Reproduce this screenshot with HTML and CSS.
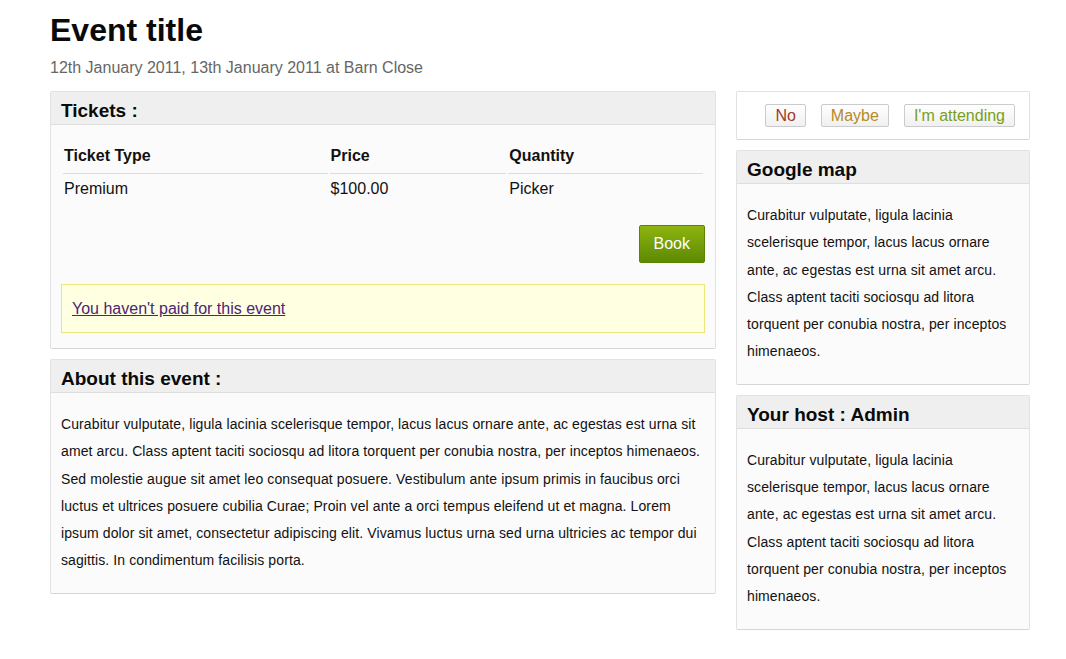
FILE: index.html
```html
<!DOCTYPE html>
<html lang="en">

<head>
    <meta charset="UTF-8">
    <meta name="viewport" content="width=device-width, initial-scale=1.0">
    <title>Event title</title>
    <link rel="stylesheet" href="styles.css">
</head>

<body>

    <div class="page">
        <h1 class="event__title">Event title</h1>
        <p class="event__meta">12th January 2011, 13th January 2011 at Barn Close</p>

        <div class="layout">
            <div class="layout__main">

                <div class="box">
                    <h2 class="box__title">Tickets :</h2>
                    <div class="box__body tickets">
                        <table class="tickets__table">
                            <thead>
                                <tr>
                                    <th class="col-type">Ticket Type</th>
                                    <th class="col-price">Price</th>
                                    <th>Quantity</th>
                                </tr>
                            </thead>
                            <tbody>
                                <tr>
                                    <td>Premium</td>
                                    <td>$100.00</td>
                                    <td>Picker</td>
                                </tr>
                            </tbody>
                        </table>
                        <div class="tickets__actions">
                            <button class="btn-book">Book</button>
                        </div>
                        <div class="notice">
                            <a href="#" class="notice__link">You haven't paid for this event</a>
                        </div>
                    </div>
                </div>

                <div class="box">
                    <h2 class="box__title">About this event :</h2>
                    <div class="box__body box__text">
                        <p>Curabitur vulputate, ligula lacinia scelerisque tempor, lacus lacus ornare ante, ac egestas est urna sit amet arcu. Class aptent taciti sociosqu ad litora torquent per conubia nostra, per inceptos himenaeos. Sed molestie augue sit amet leo consequat posuere. Vestibulum ante ipsum primis in faucibus orci luctus et ultrices posuere cubilia Curae; Proin vel ante a orci tempus eleifend ut et magna. Lorem ipsum dolor sit amet, consectetur adipiscing elit. Vivamus luctus urna sed urna ultricies ac tempor dui sagittis. In condimentum facilisis porta.</p>
                    </div>
                </div>

            </div>

            <div class="layout__side">

                <div class="box rsvp">
                    <button class="rsvp__button rsvp__button--no">No</button>
                    <button class="rsvp__button rsvp__button--maybe">Maybe</button>
                    <button class="rsvp__button rsvp__button--yes">I'm attending</button>
                </div>

                <div class="box">
                    <h2 class="box__title">Google map</h2>
                    <div class="box__body box__text">
                        <p>Curabitur vulputate, ligula lacinia scelerisque tempor, lacus lacus ornare ante, ac egestas est urna sit amet arcu. Class aptent taciti sociosqu ad litora torquent per conubia nostra, per inceptos himenaeos.</p>
                    </div>
                </div>

                <div class="box">
                    <h2 class="box__title">Your host : Admin</h2>
                    <div class="box__body box__text">
                        <p>Curabitur vulputate, ligula lacinia scelerisque tempor, lacus lacus ornare ante, ac egestas est urna sit amet arcu. Class aptent taciti sociosqu ad litora torquent per conubia nostra, per inceptos himenaeos.</p>
                    </div>
                </div>

            </div>
        </div>
    </div>

</body>

</html>
```

FILE: styles.css
```css
html {
    box-sizing: border-box;
    background: #fff;
}

*,
*:before,
*:after {
    box-sizing: inherit;
}

body {
    margin: 0;
    font-family: 'Liberation Sans', Arial, sans-serif;
    color: #111;
}

.page {
    width: 980px;
    margin-left: 50px;
    padding-top: 12px;
}

.event__title {
    margin: 0;
    font-size: 32px;
    line-height: 37px;
    font-weight: bold;
    color: #0a0a0a;
}

.event__meta {
    margin: 9px 0 0;
    font-size: 16px;
    line-height: 20px;
    color: #666;
}

.layout {
    display: flex;
    gap: 20px;
    margin-top: 13px;
    align-items: flex-start;
}

.layout__main {
    width: 666px;
}

.layout__side {
    width: 294px;
}

.box {
    background: #fbfbfb;
    border: 1px solid #e2e2e2;
    border-bottom-color: #d6d6d6;
    border-radius: 2px;
    margin-bottom: 10px;
}

.box__title {
    margin: 0;
    padding: 5px 10px 0;
    height: 33px;
    line-height: 27px;
    font-size: 19px;
    font-weight: bold;
    color: #0a0a0a;
    background: #efefef;
    border-bottom: 1px solid #dedede;
}

.box__body {
    padding: 18px 10px 18px;
}

.box__text p {
    margin: 0;
    font-size: 14px;
    letter-spacing: 0.1px;
    line-height: 27.3px;
    color: #111;
}

/* tickets */

.tickets {
    padding: 16px 10px 15px;
}

.tickets__table {
    width: 100%;
    border-spacing: 2px;
    font-size: 16px;
    line-height: 20px;
}

.tickets__table th {
    text-align: left;
    font-weight: bold;
    padding: 3px 1px 7px;
    border-bottom: 1px solid #dcdcdc;
}

.tickets__table td {
    padding: 3px 1px;
}

.col-type {
    width: 41.6%;
}

.col-price {
    width: 27.8%;
}

.tickets__actions {
    display: flex;
    justify-content: flex-end;
    margin-top: 21px;
}

.btn-book {
    height: 38px;
    padding: 0 14px;
    border: 1px solid #5c8300;
    border-radius: 2px;
    background: linear-gradient(#8db40f, #5e8903);
    color: #fff;
    font-family: 'Liberation Sans', Arial, sans-serif;
    font-size: 16px;
    cursor: pointer;
}

.notice {
    margin-top: 21px;
    padding: 14px 10px 13px;
    background: #ffffe2;
    border: 1px solid #ece57a;
    font-size: 16px;
    line-height: 20px;
}

.notice__link {
    color: #4e2576;
}

/* rsvp */

.rsvp {
    display: flex;
    justify-content: flex-end;
    gap: 15px;
    padding: 12px 14px 12px;
    background: #fff;
}

.rsvp__button {
    padding: 0 9px;
    height: 23px;
    line-height: 21px;
    border: 1px solid #cbcbcb;
    border-radius: 2px;
    background: linear-gradient(#fff, #f0f0f0);
    font-family: 'Liberation Sans', Arial, sans-serif;
    font-size: 16px;
    cursor: pointer;
}

.rsvp__button--no {
    color: #a23a25;
}

.rsvp__button--maybe {
    color: #b58a1f;
}

.rsvp__button--yes {
    color: #7a9e1d;
}
```
